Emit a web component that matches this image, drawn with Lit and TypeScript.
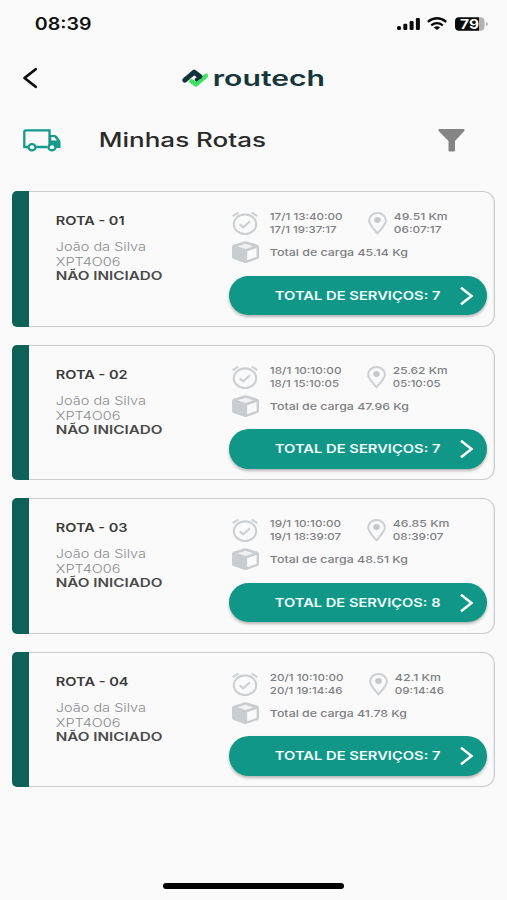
import { LitElement, html, svg, css } from "lit";
import { customElement, property } from "lit/decorators.js";

interface Line {
  text: string;
  width: number;
}

interface Route {
  name: Line;
  start: Line;
  end: Line;
  distance: Line;
  duration: Line;
  load: Line;
  services: number;
}

const routes: Route[] = [
  {
    name: { text: "ROTA - 01", width: 68 },
    start: { text: "17/1 13:40:00", width: 72 },
    end: { text: "17/1 19:37:17", width: 66 },
    distance: { text: "49.51 Km", width: 53 },
    duration: { text: "06:07:17", width: 47 },
    load: { text: "Total de carga 45.14 Kg", width: 137.5 },
    services: 7,
  },
  {
    name: { text: "ROTA - 02", width: 71 },
    start: { text: "18/1 10:10:00", width: 71 },
    end: { text: "18/1 15:10:05", width: 68.5 },
    distance: { text: "25.62 Km", width: 54 },
    duration: { text: "05:10:05", width: 47 },
    load: { text: "Total de carga 47.96 Kg", width: 138.5 },
    services: 7,
  },
  {
    name: { text: "ROTA - 03", width: 71 },
    start: { text: "19/1 10:10:00", width: 70.5 },
    end: { text: "19/1 18:39:07", width: 70.5 },
    distance: { text: "46.85 Km", width: 56 },
    duration: { text: "08:39:07", width: 50 },
    load: { text: "Total de carga 48.51 Kg", width: 137.5 },
    services: 8,
  },
  {
    name: { text: "ROTA - 04", width: 72 },
    start: { text: "20/1 10:10:00", width: 73 },
    end: { text: "20/1 19:14:46", width: 72 },
    distance: { text: "42.1 Km", width: 45.5 },
    duration: { text: "09:14:46", width: 48.5 },
    load: { text: "Total de carga 41.78 Kg", width: 136.5 },
    services: 7,
  },
];

/* One line of wide-set text; the baseline sits at `base` below the top. */
const line = (l: Line, height: number, base: number, cls: string) => html`
  <svg class="line ${cls}" width=${l.width} height=${height}>
    ${svg`<text x="-0.2" y=${base} textLength=${l.width + 0.7} lengthAdjust="spacingAndGlyphs">${l.text}</text>`}
  </svg>
`;

const textStyles = css`
  svg {
    display: block;
    overflow: visible;
    flex: none;
  }
  .line {
    font-family: Inter, "Liberation Sans", sans-serif;
  }
`;

@customElement("route-card")
export class RouteCard extends LitElement {
  @property({ attribute: false }) route!: Route;

  static styles = [
    textStyles,
    css`
      :host {
        display: block;
      }
      .card {
        box-sizing: border-box;
        height: 135.5px;
        display: flex;
        border: 1px solid #cbcecf;
        border-left: 0;
        border-radius: 6px 12px 12px 6px;
        box-shadow: inset -0.5px 0 0.5px #d8dadb;
      }
      .bar {
        width: 17.3px;
        margin: -1px 0;
        background: #0e6157;
        border-radius: 5px 0 0 5px;
        flex: none;
      }
      .info {
        width: 173px;
        padding: 22px 0 0 27px;
      }
      .name {
        font-size: 11.8px;
        font-weight: 600;
        fill: #3a3a3a;
      }
      .light {
        font-size: 12.2px;
        font-weight: 300;
        fill: #8a8d8f;
      }
      .status {
        font-size: 11.6px;
        font-weight: 600;
        fill: #4a4a4a;
      }
      .details {
        width: 258.5px;
      }
      .row {
        display: flex;
        padding: 20px 0 0 3px;
      }
      .times {
        padding-left: 12px;
      }
      .pin {
        margin: 0 7px 0 26px;
      }
      .load {
        display: flex;
        padding: 5px 0 0 3px;
        gap: 11px;
      }
      .small {
        font-size: 9.6px;
        font-weight: 500;
        fill: #7d8083;
      }
      .button {
        box-sizing: border-box;
        height: 39.5px;
        width: 258px;
        margin: 11.8px 0 0;
        padding: 0 14px 0 46px;
        border: 0;
        border-radius: 20px;
        background: #119788;
        box-shadow: 0 2px 3px rgba(0, 0, 0, 0.28);
        display: flex;
        align-items: center;
        justify-content: space-between;
      }
      .label {
        font-size: 11.5px;
        font-weight: 600;
        fill: #f2fffd;
      }
    `,
  ];

  render() {
    const r = this.route;
    return html`
      <div class="card">
        <div class="bar"></div>
        <div class="info">
          ${line(r.name, 20, 11.2, "name")}
          ${line({ text: "João da Silva", width: 89.5 }, 22, 17, "light")}
          ${line({ text: "XPT4O06", width: 64 }, 14, 9.5, "light")}
          ${line({ text: "NÃO INICIADO", width: 106 }, 14, 9.5, "status")}
        </div>
        <div class="details">
          <div class="row">
            <svg width="26" height="24" fill="none" stroke="#cdd0d2" stroke-width="2.1">
              <ellipse cx="13" cy="12.2" rx="11.2" ry="9.8" />
              <path d="M7.7 12.4 11.2 15.4 18 9.2M.7 4.1 6.3.7M19.7.7 25.3 4.1" />
            </svg>
            <div class="times">
              ${line(r.start, 12, 8.4, "small")} ${line(r.end, 12, 8.6, "small")}
            </div>
            <svg class="pin" width="19" height="24">
              <path
                d="M9.5 1C4.8 1 1.1 4.3 1.1 8.5c0 3.8 4.4 8 8.4 13 4-5 8.4-9.2 8.4-13C17.9 4.3 14.2 1 9.5 1Z"
                fill="none" stroke="#cdd0d2" stroke-width="2" stroke-linejoin="round"
              />
              <ellipse cx="9.5" cy="8" rx="3.3" ry="2.9" fill="#c5c9cc" />
            </svg>
            <div>
              ${line(r.distance, 12, 8.4, "small")} ${line(r.duration, 12, 8.6, "small")}
            </div>
          </div>
          <div class="load">
            <svg width="27" height="23">
              <path
                d="M12 .6Q13.500 0 15 .6L25.500 3.800Q27 4.400 27 6V16Q27 17.500 25.500 18.100L15 21.700Q13.500 22.200 12 21.700L1.500 18.100Q0 17.500 0 16V6Q0 4.400 1.500 3.800Z"
                fill="#cacdd0"
              />
              <path d="M13.500 2.800 21.500 5.300 13.500 8 5.500 5.300Z" fill="#f0f1f2" />
              <path d="M15.200 10.300 24.600 7V15.900L15.200 19.300Z" fill="#fafafa" />
            </svg>
            ${line(r.load, 22, 14.8, "small")}
          </div>
          <button class="button">
            ${line({ text: `TOTAL DE SERVIÇOS: ${r.services}`, width: 165 }, 14, 11.2, "label")}
            <svg width="13" height="18" fill="none" stroke="#fff" stroke-width="2.5">
              <path d="M1 .8 11.5 9 1 17.2" />
            </svg>
          </button>
        </div>
      </div>
    `;
  }
}

@customElement("app-root")
export class AppRoot extends LitElement {
  static styles = [
    textStyles,
    css`
      :host {
        display: flex;
        flex-direction: column;
        box-sizing: border-box;
        height: 900px;
        background: #fafafa;
        overflow: hidden;
      }
      .status-bar {
        display: flex;
        align-items: center;
        justify-content: space-between;
        height: 48px;
        box-sizing: border-box;
        padding: 0 19.5px 0 35px;
      }
      .clock {
        font-size: 16.8px;
        font-weight: 600;
        fill: #111;
      }
      .battery {
        font-size: 12.5px;
        font-weight: 700;
        fill: #fff;
        font-family: Inter, sans-serif;
      }
      .system {
        display: flex;
        align-items: center;
        gap: 7.5px;
      }
      .nav {
        display: grid;
        grid-template-columns: 159px 1fr;
        align-items: center;
        height: 60px;
        padding-left: 23px;
      }
      .brand {
        display: flex;
        align-items: center;
        gap: 4px;
      }
      .wordmark {
        font-size: 21px;
        font-weight: 600;
        fill: #16373a;
      }
      .heading {
        display: flex;
        align-items: center;
        height: 64px;
        padding: 0 42px 0 23px;
      }
      .title {
        margin-left: 37.5px;
        font-size: 19.4px;
        font-weight: 500;
        fill: #2a2a2a;
      }
      .filter {
        margin-left: auto;
      }
      .list {
        display: flex;
        flex-direction: column;
        gap: 18px;
        padding: 19px 12px 0;
      }
      .home {
        width: 180.5px;
        height: 5.6px;
        border-radius: 3px;
        background: #000;
        margin: auto 0 11.4px 163px;
      }
    `,
  ];

  render() {
    return html`
      <div class="status-bar">
        ${line({ text: "08:39", width: 56 }, 14, 13.2, "clock")}
        <div class="system">
          <svg width="23" height="14" fill="#0a0a0a">
            <rect x="0" y="9" width="4" height="4" rx="1.5" />
            <rect x="6.3" y="6.8" width="4" height="6.2" rx="1.2" />
            <rect x="12.6" y="4" width="4" height="9" rx="1.2" />
            <rect x="18.9" y="1" width="4" height="12" rx="1.2" />
          </svg>
          <svg width="20" height="14" fill="none" stroke="#0a0a0a" stroke-width="2.3">
            <path d="M.8 4.800Q10-2.200 19.200 4.800M4.200 8.300Q10 3.900 15.800 8.300" />
            <path d="M10 12.900 6.800 10.500Q10 8.200 13.200 10.500Z" fill="#0a0a0a" stroke="none" />
          </svg>
          <svg width="33" height="14">
            <path d="M4 .2H24V13.800H4Q0 13.800 0 9.800V4.200Q0 .2 4 .2Z" fill="#0a0a0a" />
            <path d="M24 .2H25.500Q29.500 .2 29.500 4.200V9.800Q29.500 13.800 25.500 13.800H24Z" fill="#b3b3b3" />
            <path d="M31 4.800Q33 5.500 33 7T31 9.200Z" fill="#b8b8b8" />
            <text class="battery" x="5" y="11.500" textLength="19" lengthAdjust="spacingAndGlyphs">79</text>
          </svg>
        </div>
      </div>
      <div class="nav">
        <svg width="15" height="20" fill="none" stroke="#0a0a0a" stroke-width="2.7" stroke-linecap="round">
          <path d="M12.700 1.200 1.500 10 12.700 18.800" stroke-linejoin="round" />
        </svg>
        <div class="brand">
          <svg width="26.5" height="18" fill="none" stroke-linecap="round" stroke-linejoin="round">
            <path d="M9.500 12.300 14 15.300 23.800 7" stroke="#3be265" stroke-width="4.600" />
            <path d="M2.800 11.200 12.200 3.200 18 7.600" stroke="#123338" stroke-width="5" />
            <path d="M17.800 8 14.500 10.600" stroke="#123338" stroke-width="3.400" />
          </svg>
          ${line({ text: "routech", width: 111.5 }, 18, 17, "wordmark")}
        </div>
      </div>
      <div class="heading">
        <svg width="38" height="23">
          <path d="M5 18H1.300V3Q1.300 1.300 3 1.300H26.500V17.500M13 18H24.500" fill="none" stroke="#159b8e" stroke-width="2.300" />
          <path d="M26 6H31.500Q33 6 34 7.300L37.500 12V19H26Z" fill="#159b8e" />
          <path d="M28.300 7.900H31.300L34 11.600H28.300Z" fill="#fafafa" />
          <ellipse cx="9" cy="18.300" rx="3.500" ry="3.100" fill="#fafafa" stroke="#159b8e" stroke-width="2.300" />
          <ellipse cx="29" cy="18.300" rx="3.500" ry="3.100" fill="#fafafa" stroke="#159b8e" stroke-width="2.300" />
        </svg>
        ${line({ text: "Minhas Rotas", width: 166.5 }, 20, 17, "title")}
        <svg class="filter" width="27" height="23">
          <path d="M1.200 0H25.800Q27.300 .6 26.300 1.900L17 12V21.500Q17 22.500 16 22.500H11.500Q10.500 22.500 10.500 21.500V12L.7 1.900Q-.3 .6 1.200 0Z" fill="#858585" />
        </svg>
      </div>
      <div class="list">${routes.map((r) => html`<route-card .route=${r}></route-card>`)}</div>
      <div class="home"></div>
    `;
  }
}
